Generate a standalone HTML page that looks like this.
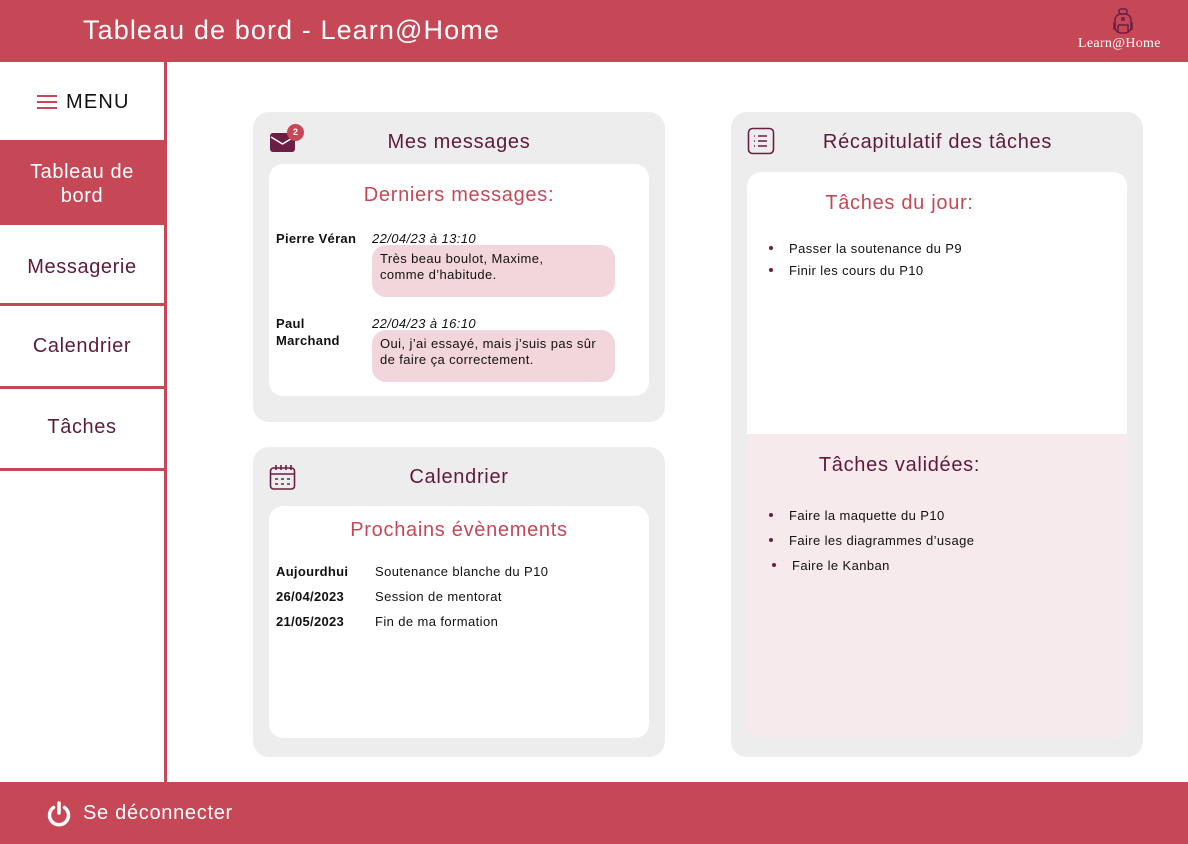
<!DOCTYPE html>
<html><head><meta charset="utf-8"><style>
*{margin:0;padding:0;box-sizing:border-box}
body{width:1188px;height:844px;position:relative;background:#fff;font-family:"Liberation Sans",sans-serif;overflow:hidden;color:#111}
.a{position:absolute;white-space:nowrap}
.hdr{left:0;top:0;width:1188px;height:62px;background:#c64856}
.ftr{left:0;top:782px;width:1188px;height:62px;background:#c64856}
.side{left:164px;top:62px;width:3px;height:720px;background:#c64856}
.mi{left:0;width:164px;text-align:center;color:#5e1a3c;font-size:20px;letter-spacing:0.6px}
.ln{left:0;width:164px;height:3px;background:#c64856}
.card{background:#ededed;border-radius:16px}
.in{background:#fff;border-radius:14px}
.ttl{color:#5e1a3c;font-size:20px;text-align:center;letter-spacing:0.7px}
.sub{color:#c64856;font-size:20px;text-align:center;letter-spacing:0.7px}
.b{font-weight:bold;font-size:13px;color:#111;letter-spacing:0.3px}
.s{font-size:13px;color:#111;letter-spacing:0.4px}
.bub{background:#f3d6db;border-radius:14px;font-size:13px;padding:6px 8px;line-height:16px;letter-spacing:0.4px}
.dot{width:4px;height:4px;border-radius:50%;background:#6b1f44}
</style></head><body>
<div class="a hdr"></div>
<div class="a" style="left:83px;top:15px;color:#fff;font-size:27px;letter-spacing:1.1px">Tableau de bord - Learn@Home</div>
<svg class="a" style="left:1112px;top:8px" width="22" height="27" viewBox="0 0 22 27" fill="none" stroke="#6b1f44" stroke-width="1.5"><rect x="7" y="1" width="8" height="5" rx="2"/><rect x="3" y="6" width="16" height="19" rx="6"/><circle cx="11" cy="11" r="1.3"/><path d="M6 17h10v7M6 17v7M3 15h-1v6h1M19 15h1v6h-1"/></svg>
<div class="a" style="left:1078px;top:36px;color:#fff;font-size:14px;font-family:'Liberation Serif',serif;letter-spacing:0.3px">Learn@Home</div>

<div class="a side"></div>
<svg class="a" style="left:37px;top:94px" width="20" height="16"><path d="M0 2h20M0 8h20M0 14h20" stroke="#c64856" stroke-width="2"/></svg>
<div class="a" style="left:66px;top:91px;font-size:20px;color:#111;letter-spacing:1.2px">MENU</div>
<div class="a" style="left:0;top:140px;width:164px;height:85px;background:#c64856"></div>
<div class="a mi" style="top:160px;color:#fff;line-height:24px">Tableau de<br>bord</div>
<div class="a ln" style="top:303px"></div>
<div class="a ln" style="top:386px"></div>
<div class="a ln" style="top:468px"></div>
<div class="a mi" style="top:256px">Messagerie</div>
<div class="a mi" style="top:335px">Calendrier</div>
<div class="a mi" style="top:416px">Tâches</div>

<!-- messages -->
<div class="a card" style="left:253px;top:112px;width:412px;height:310px"></div>
<svg class="a" style="left:270px;top:131px" width="26" height="22"><rect x="0" y="2" width="25" height="19" rx="3" fill="#6b1f44"/><path d="M1 6l11.5 7L24 6" stroke="#fff" stroke-width="1.5" fill="none"/></svg>
<div class="a" style="left:287px;top:124px;width:17px;height:17px;border-radius:50%;background:#c64856;color:#fff;font-size:9px;text-align:center;line-height:17px;font-weight:bold">2</div>
<div class="a ttl" style="left:253px;top:131px;width:412px">Mes messages</div>
<div class="a in" style="left:269px;top:164px;width:380px;height:232px"></div>
<div class="a sub" style="left:269px;top:184px;width:380px">Derniers messages:</div>
<div class="a b" style="left:276px;top:231px">Pierre Véran</div>
<div class="a s" style="left:372px;top:231px;font-style:italic">22/04/23 à 13:10</div>
<div class="a bub" style="left:372px;top:245px;width:243px;height:52px">Très beau boulot, Maxime,<br>comme d’habitude.</div>
<div class="a b" style="left:276px;top:315px;line-height:17px">Paul<br>Marchand</div>
<div class="a s" style="left:372px;top:316px;font-style:italic">22/04/23 à 16:10</div>
<div class="a bub" style="left:372px;top:330px;width:243px;height:52px">Oui, j’ai essayé, mais j’suis pas sûr<br>de faire ça correctement.</div>

<!-- calendar -->
<div class="a card" style="left:253px;top:447px;width:412px;height:310px"></div>
<svg class="a" style="left:269px;top:464px" width="27" height="27" fill="none" stroke="#6b1f44" stroke-width="1.6"><rect x="1.5" y="4" width="24" height="21" rx="3"/><path d="M1.5 10h24M7 1v5M12 1v5M17 1v5M22 1v5M6 15h3M12 15h3M18 15h3M6 20h3M12 20h3M18 20h3"/></svg>
<div class="a ttl" style="left:253px;top:466px;width:412px">Calendrier</div>
<div class="a in" style="left:269px;top:506px;width:380px;height:232px"></div>
<div class="a sub" style="left:269px;top:519px;width:380px">Prochains évènements</div>
<div class="a b" style="left:276px;top:564px">Aujourdhui</div><div class="a s" style="left:375px;top:564px">Soutenance blanche du P10</div>
<div class="a b" style="left:276px;top:589px">26/04/2023</div><div class="a s" style="left:375px;top:589px">Session de mentorat</div>
<div class="a b" style="left:276px;top:614px">21/05/2023</div><div class="a s" style="left:375px;top:614px">Fin de ma formation</div>

<!-- tasks -->
<div class="a card" style="left:731px;top:112px;width:412px;height:645px"></div>
<svg class="a" style="left:747px;top:127px" width="28" height="28" fill="none" stroke="#6b1f44" stroke-width="1.6"><rect x="1.5" y="1.5" width="25" height="25" rx="4"/><path d="M11 9h9M11 14h9M11 19h9M7 9h1M7 14h1M7 19h1"/></svg>
<div class="a ttl" style="left:780px;top:131px;width:315px">Récapitulatif des tâches</div>
<div class="a in" style="left:747px;top:172px;width:380px;height:566px;overflow:hidden"><div class="a" style="left:0;top:262px;width:380px;height:304px;background:#f6eaed"></div></div>
<div class="a sub" style="left:747px;top:192px;width:305px">Tâches du jour:</div>
<div class="a dot" style="left:769px;top:246px"></div><div class="a s" style="left:789px;top:241px">Passer la soutenance du P9</div>
<div class="a dot" style="left:769px;top:268px"></div><div class="a s" style="left:789px;top:263px">Finir les cours du P10</div>
<div class="a ttl" style="left:747px;top:454px;width:305px">Tâches validées:</div>
<div class="a dot" style="left:769px;top:513px"></div><div class="a s" style="left:789px;top:508px">Faire la maquette du P10</div>
<div class="a dot" style="left:769px;top:538px"></div><div class="a s" style="left:789px;top:533px">Faire les diagrammes d’usage</div>
<div class="a dot" style="left:772px;top:563px"></div><div class="a s" style="left:792px;top:558px">Faire le Kanban</div>

<div class="a ftr"></div>
<svg class="a" style="left:46px;top:800px" width="26" height="28" fill="none" stroke="#fff" stroke-width="3.5" stroke-linecap="round"><path d="M7.5 7.5A9.5 9.5 0 1 0 18.5 7.5"/><path d="M13 3v10"/></svg>
<div class="a" style="left:83px;top:802px;color:#fff;font-size:20px;letter-spacing:0.7px">Se déconnecter</div>
</body></html>
